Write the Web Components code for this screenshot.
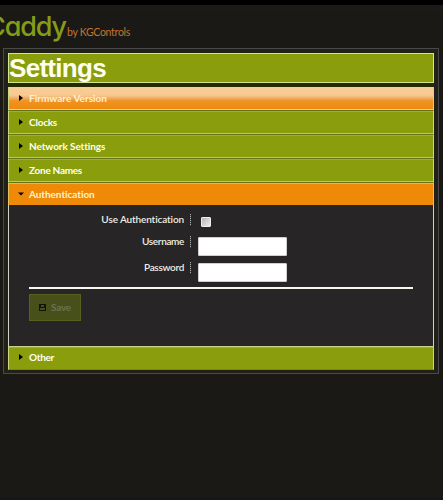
<!DOCTYPE html>
<html lang="en"><head><meta charset="utf-8"><title>Settings</title>
<style>
html,body{margin:0;height:100%;overflow:hidden;background:#1a1916}
body{font-family:Lato,"Open Sans",sans-serif}
</style></head><body>
<settings-app></settings-app>
<script>
// Text run whose letter spacing adapts so that it fills the given width.
class FitText extends HTMLElement{
  connectedCallback(){
    const r=this.attachShadow({mode:'open'});
    r.innerHTML='<style>:host{display:inline-block;white-space:nowrap}span{display:inline-block}</style><span></span>';
    const s=r.querySelector('span');s.textContent=this.getAttribute('text');
    const w=+this.getAttribute('width');
    s.style.letterSpacing=(w-s.getBoundingClientRect().width)/s.textContent.length+'px';
  }
}
class BrandBar extends HTMLElement{
  constructor(){super();this.attachShadow({mode:'open'}).innerHTML=`<style>
  :host{display:flex;box-sizing:border-box;height:48px;border-top:5px solid #000;background:linear-gradient(#1e1918,#1a1916 8px);align-items:baseline}
  .logo{font:500 27px/44px Inter,sans-serif;font-feature-settings:"cv11";color:#859c19;margin-left:-14px}
  .by{font:10.5px/14px Lato,sans-serif;color:#c5732f;margin-left:1px}
  </style><fit-text class="logo" text="Caddy" width="80"></fit-text><fit-text class="by" text="by KGControls" width="63"></fit-text>`}
}
class SettingsPanel extends HTMLElement{
  constructor(){super();this.attachShadow({mode:'open'}).innerHTML=`<style>
  :host{display:block;box-sizing:border-box;margin:0 4px 0 3px;height:326px;border:1px solid #494949;padding:4px 4px 3px;background:#222117}
  h1{box-sizing:border-box;margin:0;height:30px;border:1px solid #d5e58d;background:#899d0d;color:#fffff0;font:bold 26px/29px "Liberation Sans",Arial,sans-serif}
  .list{display:flex;flex-direction:column;border-top:4px solid #262b06}
  </style><h1><fit-text text="Settings" width="97"></fit-text></h1><div class="list"><slot></slot></div>`}
}
class AccordionItem extends HTMLElement{
  connectedCallback(){const open=this.hasAttribute('open');
  this.attachShadow({mode:'open'}).innerHTML=`<style>
  :host{display:block}
  header{box-sizing:border-box;height:24px;display:flex;align-items:center;padding:0 0 2px 9px;background:#899d0d;border:solid #c9d982;border-width:0 1px 1px;border-bottom-color:#65741a;box-shadow:inset 0 -1px #b7c961,inset 0 1px #9dae3a;color:#fffff0}
  :host([hot]) header{background:linear-gradient(#f6cf94 0,#f9c990 8px,#f3b878 10px,#ef9325 14px,#ef8908);box-shadow:inset 0 -1px #f0d860;color:#fff0ce}
  :host([open]) header{height:22px;padding-bottom:0;background:#ef8908;border-width:0 1px;border-color:#e6c05a;box-shadow:inset 0 1px #d9c52c;color:#fff3c8}
  :host([last]) header{border-top:1px solid #c7d18b;border-bottom-color:#788923;box-shadow:inset 0 1px #9caa48}
  svg{width:5px;height:8px;margin-right:6px;flex:none}
  :host([open]) svg{width:6px;margin:0 5px 0 0}
  fit-text{font:bold 10px/14px Lato,"Open Sans",sans-serif}
  section{box-sizing:border-box;height:141px;background:#272525;border:1px solid #d0d0cc;border-width:0 1px;padding:8px 20px 0}
  </style><header><svg viewBox="0 0 5 8">${open?'<path d="M-.5 2.5h6L2.5 5.5z"/>':'<path d="M1 1l4 3-4 3z"/>'}</svg><fit-text text="${this.getAttribute('label')}" width="${this.getAttribute('width')}"></fit-text></header>${open?'<section><slot></slot></section>':''}`}
}
class FormRow extends HTMLElement{
  connectedCallback(){const check=this.hasAttribute('check');
  this.attachShadow({mode:'open'}).innerHTML=`<style>
  :host{display:flex;height:26px;align-items:flex-start}
  :host([check]){height:22px}
  .label{width:155px;text-align:right;color:#eeeee6;font:600 10px/14px Lato,"Open Sans",sans-serif;margin-top:-1px}
  .dots{width:1px;height:12px;margin:1px 7px 0 6px;background:repeating-linear-gradient(#aaa 0 1px,#454343 1px 2px)}
  input{appearance:none;box-sizing:border-box;margin:2px 0 0;width:89px;height:19px;border:1px solid #cfcfcf;border-radius:1px;background:#fff}
  .check{width:10px;height:10px;margin:4px 0 0 3px;border-color:#eee;background:linear-gradient(135deg,#b5b5b5,#ededed)}
  </style><div class="label"><fit-text text="${this.getAttribute('label')}" width="${this.getAttribute('width')}"></fit-text></div><div class="dots"></div><input class="${check?'check':'field'}" type="${check?'checkbox':'text'}">`}
}
class SaveButton extends HTMLElement{
  constructor(){super();this.attachShadow({mode:'open'}).innerHTML=`<style>
  :host{display:block;border-top:2px solid #f7f7ef;padding-top:5px}
  button{box-sizing:border-box;width:52px;height:27px;display:flex;align-items:center;border:1px solid #56611e;background:#48501a;padding:0 0 1px 9px;color:#6c7052}
  svg{width:7px;height:7px;margin-right:5px}
  fit-text{font:bold 10px/14px Lato,"Open Sans",sans-serif}
  </style><button disabled><svg viewBox="0 0 7 7"><path fill="#11140a" fill-rule="evenodd" d="M0 0H7V7H0ZM2 1H5V3H2ZM1 4H6V6H1Z"/></svg><fit-text text="Save" width="20"></fit-text></button>`}
}
class SettingsApp extends HTMLElement{
  constructor(){super();this.attachShadow({mode:'open'}).innerHTML=`<style>:host{display:block;box-sizing:border-box;height:500px;border-bottom:2px solid #151419;background:#1a1916}</style>
  <brand-bar></brand-bar><settings-panel>
  <accordion-item hot label="Firmware Version" width="78"></accordion-item>
  <accordion-item label="Clocks" width="28"></accordion-item>
  <accordion-item label="Network Settings" width="76"></accordion-item>
  <accordion-item label="Zone Names" width="53"></accordion-item>
  <accordion-item open label="Authentication" width="66"><form-row check label="Use Authentication" width="83"></form-row>
    <form-row label="Username" width="42"></form-row>
    <form-row label="Password" width="40"></form-row>
    <save-button></save-button>
  </accordion-item>
  <accordion-item last label="Other" width="25"></accordion-item>
  </settings-panel>`}
}
for(const [n,c] of [['fit-text',FitText],['brand-bar',BrandBar],['settings-panel',SettingsPanel],['form-row',FormRow],['save-button',SaveButton],['accordion-item',AccordionItem],['settings-app',SettingsApp]])customElements.define(n,c);
</script></body></html>
